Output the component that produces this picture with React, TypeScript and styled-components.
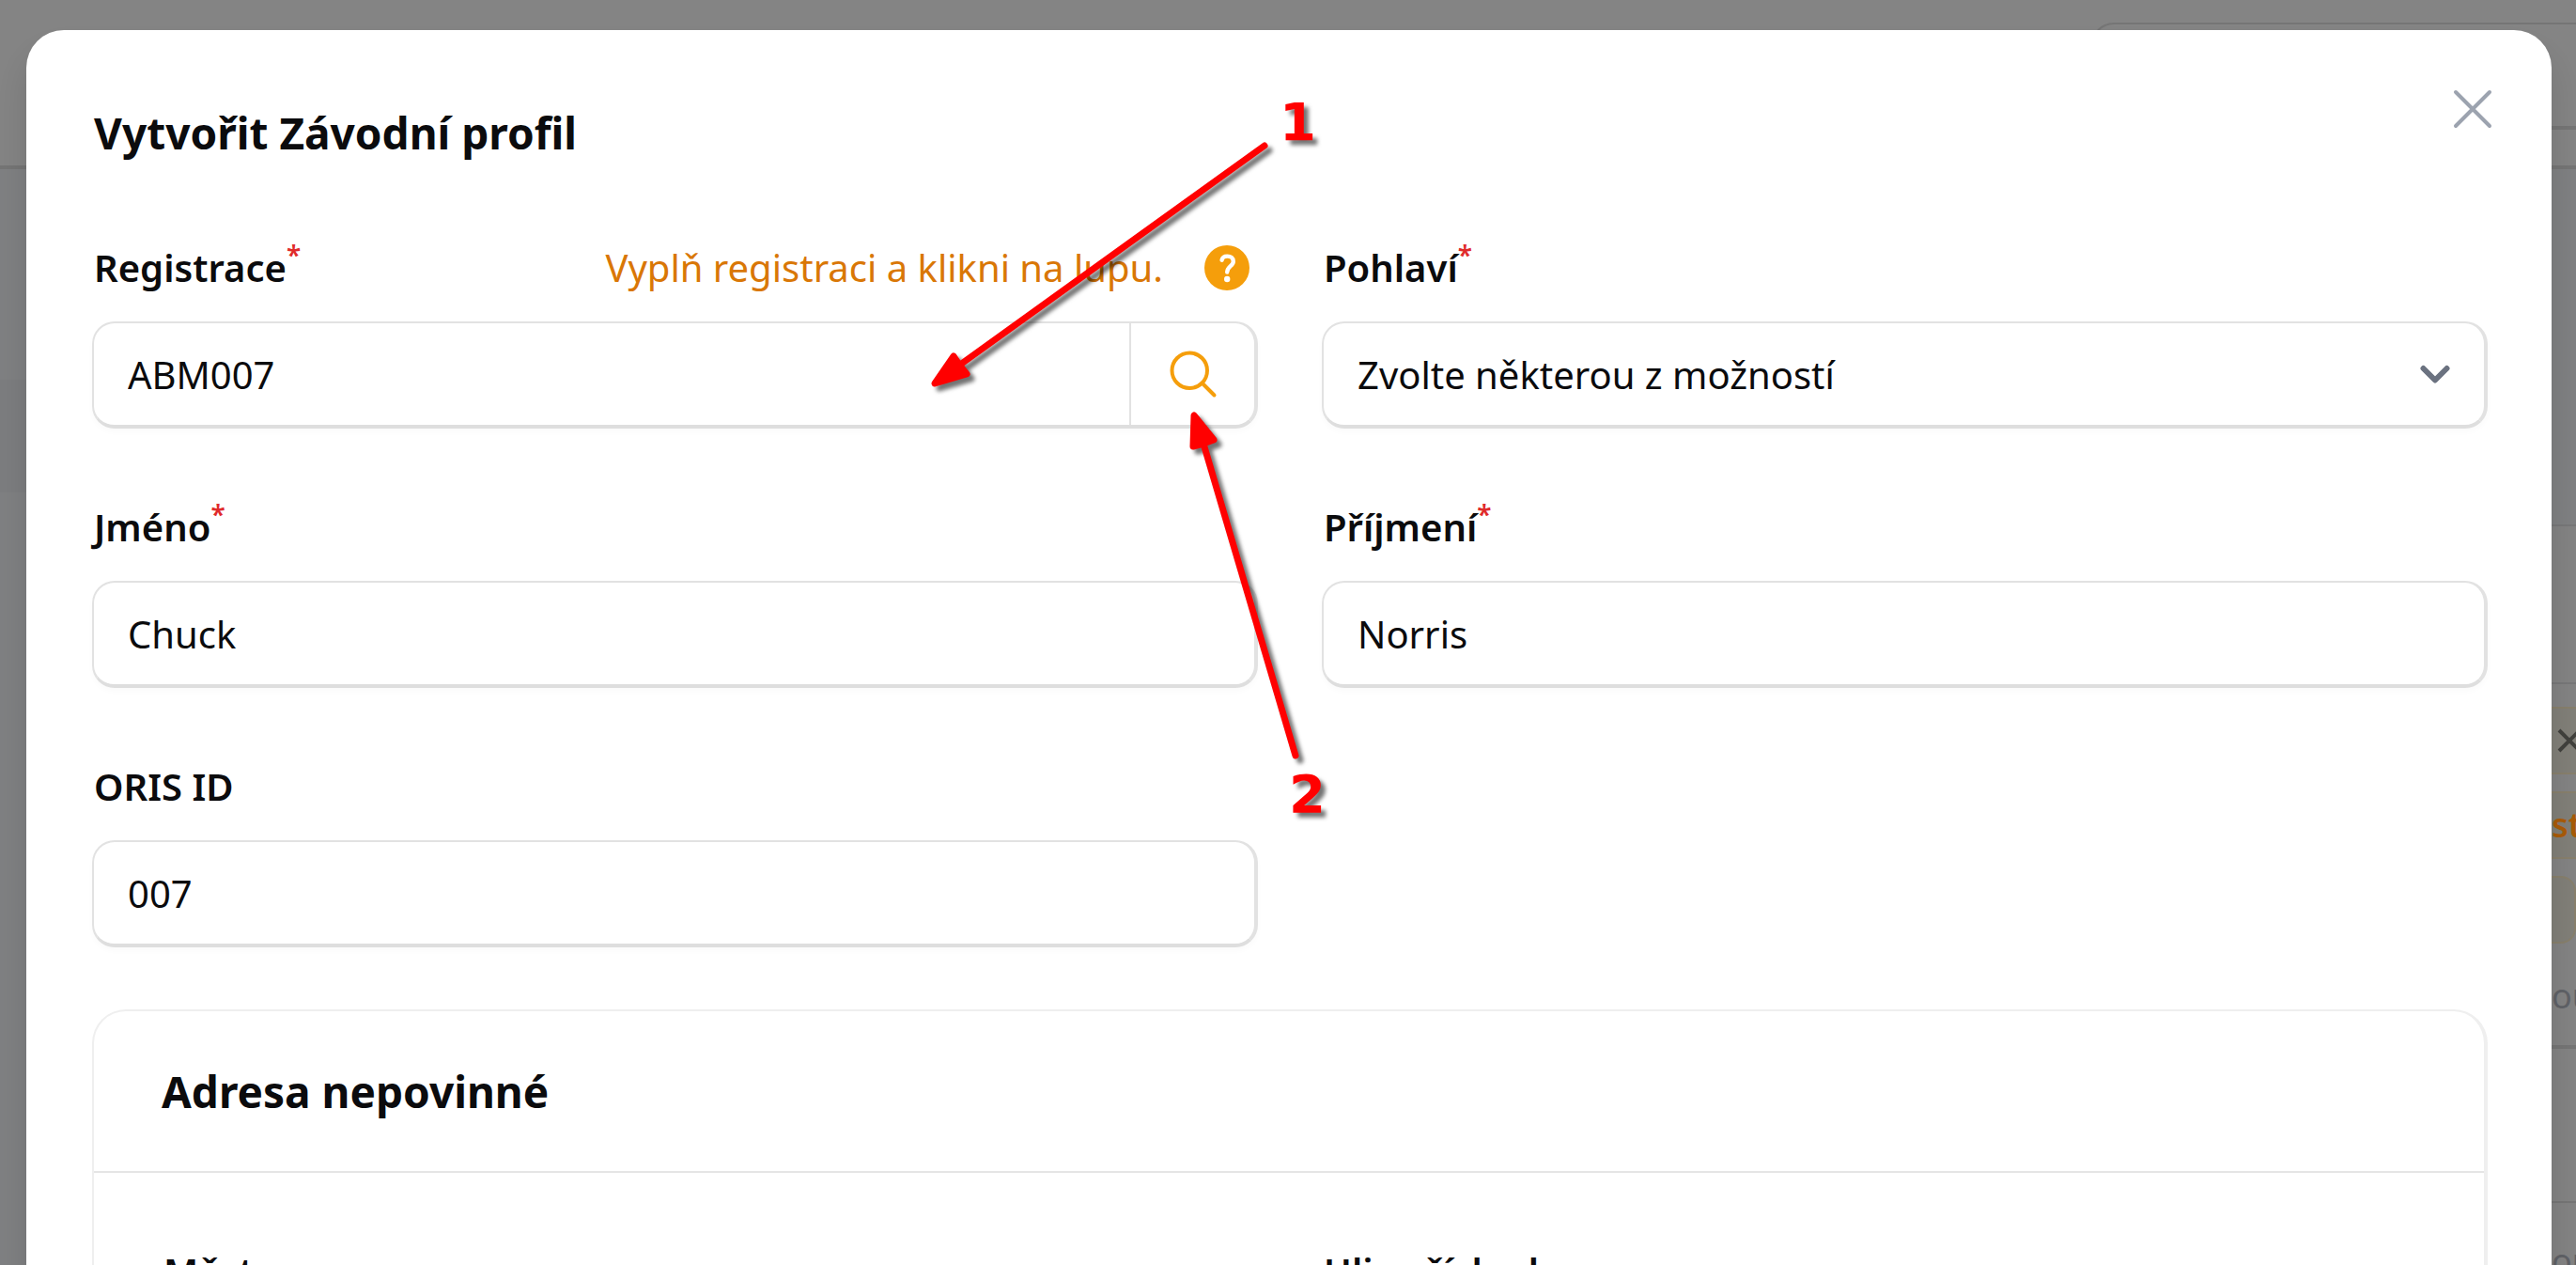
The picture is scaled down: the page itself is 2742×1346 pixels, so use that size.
import React, { useId, useState } from "react";
import styled, { createGlobalStyle } from "styled-components";

const colors = {
  text: "#0b0b0d",
  line: "#e2e2e2",
  softLine: "#efefef",
  accent: "#f59e0b",
  accentText: "#d97706",
  danger: "#e02b2b",
};

const GlobalStyle = createGlobalStyle`
  *, *::before, *::after { box-sizing: border-box; }
  body { margin: 0; background: #7f8082; }
  body, input, select, button { font-family: "Noto Sans", "Open Sans", sans-serif; }
`;

const Screen = styled.div`
  position: relative;
  height: 100vh;
  overflow: hidden;
  color: ${colors.text};
  font-size: 40px;
`;

/* Dimmed page behind the dialog */

const Backdrop = styled.div`
  position: absolute;
  inset: 0;
  display: flex;
  flex-direction: column;
  overflow: hidden;
`;

const TopBar = styled.div`
  display: flex;
  flex: none;
  justify-content: flex-end;
  align-items: flex-start;
  height: 180px;
  padding-top: 24px;
  background: #848484;
  border-bottom: 4px solid #757575;
`;

const SearchBox = styled.div`
  width: 516px;
  height: 114px;
  border: solid #757575;
  border-width: 2px 0 4px 2px;
  border-radius: 24px 0 0 24px;
`;

const PageBody = styled.div`
  display: flex;
  flex: 1;
  justify-content: space-between;
  min-height: 0;
`;

const SideNav = styled.div`
  width: 720px;
  padding-top: 224px;
`;

const SideNavItem = styled.div`
  height: 120px;
  background: #7c7d7f;
`;

const TableEdge = styled.div`
  width: 26px;
  padding-top: 378px;
  overflow: hidden;
  font-size: 36px;
  line-height: 72px;
  white-space: nowrap;
`;

const TableHead = styled.div`
  height: 170px;
  background: #838383;
  border: solid #777778;
  border-width: 2px 0;
`;

const TableRow = styled.div<{ $tall?: boolean }>`
  display: flex;
  flex-direction: column;
  gap: 18px;
  height: ${(p) => (p.$tall ? "388px" : "164px")};
  padding-top: 24px;
  background: #838383;
  border-bottom: ${(p) => (p.$tall ? "4px" : "2px")} solid #757575;
`;

const Badge = styled.div<{ $end?: boolean }>`
  display: flex;
  flex: none;
  align-items: center;
  height: 72px;
  color: #a95b08;
  font-weight: 600;
  background: #817f78;
  border: solid #877f6c;
  border-width: 2px ${(p) => (p.$end ? "2px" : "0")} 2px 0;
  border-radius: ${(p) => (p.$end ? "0 16px 16px 0" : "0")};
`;

const BadgeIcon = styled.svg`
  flex: none;
  width: 26px;
  height: 26px;
  margin-left: 6px;
`;

const MutedText = styled.div`
  color: #5f6166;
  line-height: 76px;
`;

/* Dialog */

const DialogLayer = styled.div`
  position: relative;
  height: 100%;
  padding: 32px 26px 0 28px;
`;

const Dialog = styled.section`
  position: relative;
  min-height: 100%;
  padding: 72px 68px 72px 70px;
  background: #fff;
  border-radius: 40px;
  box-shadow: 0 24px 32px rgba(0, 0, 0, 0.12);
`;

const Heading = styled.h2`
  margin: 0;
  padding-left: 2px;
  font-size: 46px;
  font-weight: 700;
  line-height: 74px;
`;

const CloseButton = styled.button`
  position: absolute;
  top: 60px;
  right: 60px;
  width: 48px;
  height: 48px;
  padding: 0;
  color: #9ca3af;
  background: none;
  border: 0;
  svg { display: block; }
`;

const FieldGrid = styled.div`
  display: grid;
  grid-template-columns: 1fr 1fr;
  gap: 66px 68px;
`;

const Form = styled.form`
  display: flex;
  flex-direction: column;
  gap: 66px;
  margin-top: 68px;
`;

const FieldBox = styled.div`
  display: flex;
  flex-direction: column;
  gap: 18px;
  min-width: 0;
`;

const LabelRow = styled.div`
  display: flex;
  justify-content: space-between;
  height: 78px;
  padding-left: 2px;
  line-height: 78px;
`;

const Label = styled.label`
  font-weight: 600;
`;

const Required = styled.sup`
  color: ${colors.danger};
  font-size: 28px;
  line-height: 0;
  vertical-align: 18px;
`;

const Hint = styled.div`
  display: flex;
  align-items: center;
  gap: 44px;
  padding-right: 9px;
  color: ${colors.accentText};
`;

const HelpButton = styled.button`
  width: 48px;
  height: 48px;
  padding: 0;
  background: none;
  border: 0;
  svg { display: block; }
`;

const Control = styled.div`
  position: relative;
  display: flex;
  height: 114px;
  overflow: hidden;
  background: #fff;
  border: solid ${colors.line};
  border-width: 2px 4px 4px 2px;
  border-bottom-color: #dedede;
  border-radius: 24px;
  box-shadow: 0 4px 6px rgba(0, 0, 0, 0.02);
`;

const TextInput = styled.input`
  flex: 1;
  min-width: 0;
  padding: 0 36px;
  color: inherit;
  font-size: 40px;
  background: none;
  border: 0;
  outline: 0;
`;

const Select = styled.select`
  flex: 1;
  min-width: 0;
  padding: 0 36px;
  color: inherit;
  font-size: 40px;
  background: none;
  border: 0;
  outline: 0;
  appearance: none;
`;

const Chevron = styled.svg`
  position: absolute;
  top: 44px;
  right: 36px;
  width: 32px;
  height: 22px;
  color: #6b7280;
  pointer-events: none;
`;

const LookupButton = styled.button`
  display: flex;
  align-items: center;
  justify-content: center;
  width: 133px;
  padding: 0;
  color: ${colors.accent};
  background: none;
  border: 0;
  border-left: 2px solid ${colors.line};
`;

const Card = styled.fieldset`
  min-width: 0;
  margin: 0;
  padding: 0;
  border: solid ${colors.softLine};
  border-width: 2px 4px 4px 2px;
  border-radius: 36px;
`;

const CardHeader = styled.div`
  padding: 48px 70px;
  border-bottom: 2px solid #e5e5e5;
`;

const CardBody = styled.div`
  padding: 66px 70px 72px 72px;
`;

const Annotations = styled.svg`
  position: absolute;
  top: 0;
  left: 0;
  pointer-events: none;
  filter: drop-shadow(5px 5px 2px rgba(0, 0, 0, 0.55));
  text {
    font-family: "DejaVu Sans", sans-serif;
    font-size: 56px;
    font-weight: 700;
  }
`;

type FieldProps = {
  label: string;
  required?: boolean;
  hint?: React.ReactNode;
  children: (id: string) => React.ReactNode;
};

function Field({ label, required, hint, children }: FieldProps) {
  const id = useId();
  return (
    <FieldBox>
      <LabelRow>
        <Label htmlFor={id}>
          {label}
          {required && <Required>*</Required>}
        </Label>
        {hint}
      </LabelRow>
      <Control>{children(id)}</Control>
    </FieldBox>
  );
}

function TextField({ value = "", ...rest }: { label: string; required?: boolean; value?: string }) {
  const [current, setCurrent] = useState(value);
  return (
    <Field {...rest}>
      {(id) => <TextInput id={id} value={current} onChange={(e) => setCurrent(e.target.value)} />}
    </Field>
  );
}

function RegistrationField() {
  const [value, setValue] = useState("ABM007");
  return (
    <Field
      label="Registrace"
      required
      hint={
        <Hint>
          <span>Vyplň registraci a klikni na lupu.</span>
          <HelpButton type="button" aria-label="Nápověda">
            <svg width="48" height="48" viewBox="0 0 48 48" fill="none">
              <circle cx="24" cy="24" r="24" fill={colors.accent} />
              <path
                d="M18.6 15.8C19.2 12.8 21.4 11.6 24.4 11.6C28 11.6 30.8 13.6 30.8 17.2C30.8 22.2 24.2 22.4 24.2 28.6"
                stroke="#fff"
                strokeWidth="4.4"
                strokeLinecap="round"
              />
              <circle cx="24.2" cy="36" r="3.2" fill="#fff" />
            </svg>
          </HelpButton>
        </Hint>
      }
    >
      {(id) => (
        <>
          <TextInput id={id} value={value} onChange={(e) => setValue(e.target.value)} />
          <LookupButton type="button" aria-label="Vyhledat">
            <svg width="60" height="60" viewBox="0 0 24 24" fill="none" stroke="currentColor" strokeWidth="1.6" strokeLinecap="round">
              <circle cx="10.5" cy="10.5" r="7.5" />
              <path d="M15.8 15.8L21 21" />
            </svg>
          </LookupButton>
        </>
      )}
    </Field>
  );
}

function GenderField() {
  return (
    <Field label="Pohlaví" required>
      {(id) => (
        <>
          <Select id={id} defaultValue="">
            <option value="">Zvolte některou z možností</option>
            <option value="m">Muž</option>
            <option value="f">Žena</option>
          </Select>
          <Chevron viewBox="0 0 32 22" fill="none" stroke="currentColor" strokeWidth="6" strokeLinecap="round" strokeLinejoin="round">
            <path d="M3.5 4L16 16.5L28.5 4" />
          </Chevron>
        </>
      )}
    </Field>
  );
}

function DimmedPage() {
  return (
    <Backdrop aria-hidden="true">
      <TopBar>
        <SearchBox />
      </TopBar>
      <PageBody>
        <SideNav>
          <SideNavItem />
        </SideNav>
        <TableEdge>
          <TableHead />
          <TableRow $tall>
            <Badge>
              <BadgeIcon viewBox="0 0 26 26" fill="none" stroke="#41413d" strokeWidth="4">
                <path d="M2 2L24 24M24 2L2 24" />
              </BadgeIcon>
            </Badge>
            <Badge>st</Badge>
            <Badge $end />
            <MutedText>ou</MutedText>
          </TableRow>
          <TableRow />
          <TableRow>
            <MutedText>ou</MutedText>
          </TableRow>
        </TableEdge>
      </PageBody>
    </Backdrop>
  );
}

export default function App() {
  return (
    <Screen>
      <GlobalStyle />
      <DimmedPage />
      <DialogLayer>
        <Dialog role="dialog" aria-labelledby="dialog-title">
          <Heading id="dialog-title">Vytvořit Závodní profil</Heading>
          <CloseButton type="button" aria-label="Zavřít">
            <svg width="48" height="48" viewBox="0 0 48 48" fill="none" stroke="currentColor" strokeWidth="4" strokeLinecap="round">
              <path d="M6 6L42 42M42 6L6 42" />
            </svg>
          </CloseButton>
          <Form>
            <FieldGrid>
              <RegistrationField />
              <GenderField />
              <TextField label="Jméno" required value="Chuck" />
              <TextField label="Příjmení" required value="Norris" />
              <TextField label="ORIS ID" value="007" />
            </FieldGrid>
            <Card aria-labelledby="address-title">
              <CardHeader>
                <Heading as="h3" id="address-title">Adresa nepovinné</Heading>
              </CardHeader>
              <CardBody>
                <FieldGrid>
                  <TextField label="Město" />
                  <TextField label="Ulice číslo domu" />
                </FieldGrid>
              </CardBody>
            </Card>
          </Form>
        </Dialog>
      </DialogLayer>
      <Annotations width="1500" height="920" viewBox="0 0 1500 920" fill="#f00" stroke="none">
        <g stroke="#f00" strokeWidth="7" strokeLinecap="round" strokeLinejoin="round">
          <path d="M1346 155L1022 388" />
          <path d="M995 408L1015 379L1021 388L1029 398Z" />
          <path d="M1379 804L1281 472" />
          <path d="M1271 442L1270 475L1281 472L1292 468Z" />
        </g>
        <text x="1362" y="149">1</text>
        <text x="1372" y="864">2</text>
      </Annotations>
    </Screen>
  );
}
